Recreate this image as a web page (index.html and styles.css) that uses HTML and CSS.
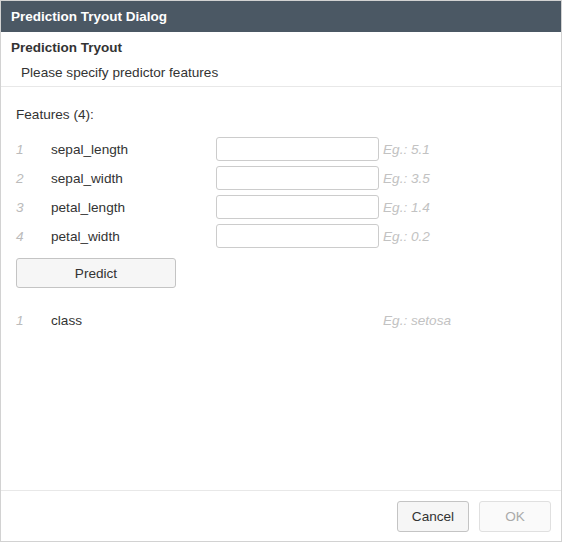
FILE: index.html
```html
<!DOCTYPE html>
<html>
<head>
<meta charset="utf-8">
<link rel="stylesheet" href="styles.css">
</head>
<body>
<div class="dialog">
  <div class="titlebar">Prediction Tryout Dialog</div>
  <div class="header">
    <div class="header-title">Prediction Tryout</div>
    <div class="header-sub">Please specify predictor features</div>
  </div>
  <div class="content">
    <div class="section-label">Features (4):</div>
    <div class="rows">
      <div class="row"><span class="num">1</span><span class="name">sepal_length</span><input class="field" type="text"><span class="eg">Eg.: 5.1</span></div>
      <div class="row"><span class="num">2</span><span class="name">sepal_width</span><input class="field" type="text"><span class="eg">Eg.: 3.5</span></div>
      <div class="row"><span class="num">3</span><span class="name">petal_length</span><input class="field" type="text"><span class="eg">Eg.: 1.4</span></div>
      <div class="row"><span class="num">4</span><span class="name">petal_width</span><input class="field" type="text"><span class="eg">Eg.: 0.2</span></div>
    </div>
    <button class="btn predict">Predict</button>
    <div class="row result"><span class="num">1</span><span class="name">class</span><span class="spacer"></span><span class="eg">Eg.: setosa</span></div>
  </div>
  <div class="footer">
    <button class="btn">Cancel</button>
    <button class="btn disabled">OK</button>
  </div>
</div>
</body>
</html>
```
FILE: styles.css
```css
* { box-sizing: border-box; }
html, body { margin: 0; padding: 0; background: #fff; }
body { font-family: "Liberation Sans", Arial, sans-serif; font-size: 13.6px; color: #333; }
.dialog {
  width: 562px; height: 542px;
  border: 1px solid #d2d2d2;
  display: flex; flex-direction: column;
  background: #fff;
}
.titlebar {
  height: 31px; background: #4b5864; color: #fff;
  font-weight: bold; font-size: 13.5px;
  padding-left: 10px; line-height: 31px;
}
.header {
  height: 55px; border-bottom: 1px solid #e8e8e8;
  padding: 8px 10px 0 10px;
}
.header-title { font-weight: bold; font-size: 13.5px; line-height: 16px; }
.header-sub { padding-left: 10px; margin-top: 9px; line-height: 16px; }
.content { flex: 1; padding: 20px 15px 0 15px; }
.section-label { line-height: 16px; }
.rows { margin-top: 14px; display: flex; flex-direction: column; gap: 5px; }
.row { display: flex; align-items: center; height: 24px; }
.num { width: 35px; color: #bbb; font-style: italic; }
.name { width: 165px; }
.field {
  width: 163px; height: 24px; border: 1px solid #ccc; border-radius: 3px;
  margin: 0; padding: 0 4px; font: inherit; background: #fff;
}
.spacer { width: 163px; }
.eg { margin-left: 4px; color: #c2c2c2; font-style: italic; }
.btn {
  font: inherit; color: #333; background: #f6f6f6;
  border: 1px solid #c4c4c4; border-radius: 3px;
  height: 31px; padding: 0; cursor: pointer;
}
.predict { width: 160px; height: 30px; margin-top: 10px; display: block; }
.result { margin-top: 20px; }
.footer {
  height: 51px; border-top: 1px solid #e8e8e8;
  display: flex; justify-content: flex-end; align-items: flex-start;
  gap: 10px; padding: 10px 10px 0 0;
}
.footer .btn { width: 72px; }
.btn.disabled { color: #aaa; border-color: #e0e0e0; background: #fafafa; }
```
